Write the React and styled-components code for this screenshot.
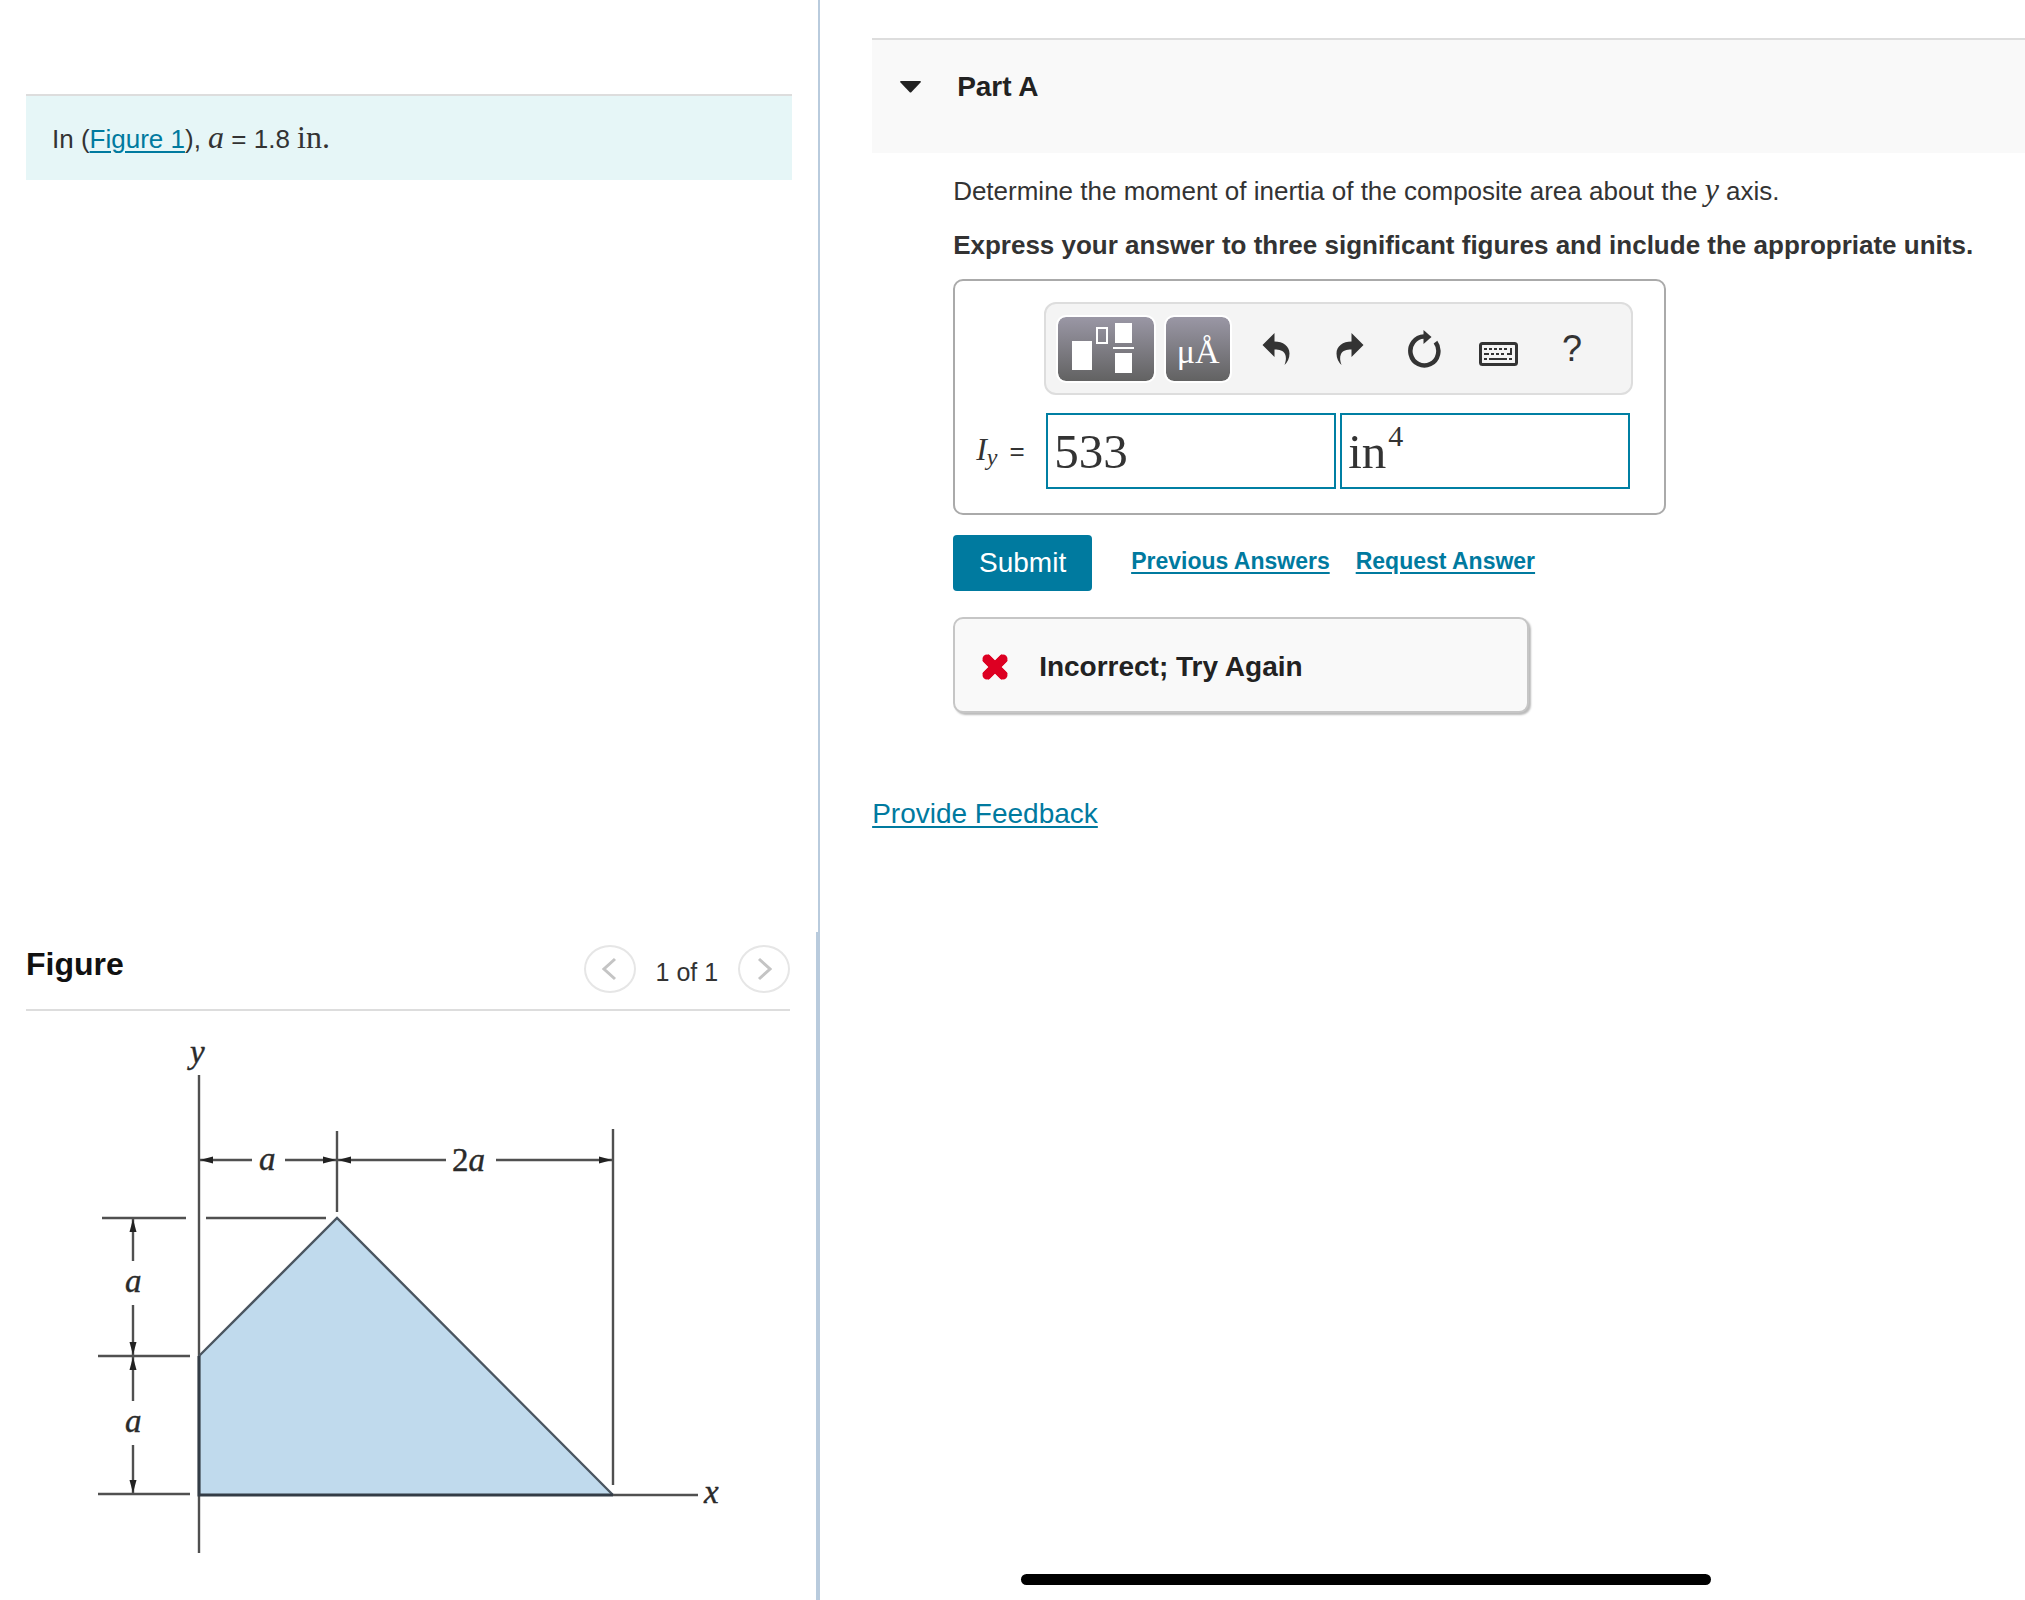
import React, { useState } from "react";
import styled, { createGlobalStyle, css } from "styled-components";

const sans = '"Liberation Sans", Arial, Helvetica, sans-serif';
const serif = '"Liberation Serif", "Times New Roman", serif';

const GlobalStyle = createGlobalStyle`
  *, *::before, *::after { box-sizing: border-box; }
  body {
    margin: 0;
    background: #fff;
    color: #333;
    font: 26px/36px ${sans};
  }
  h1, h2, p, form { margin: 0; }
`;

const Page = styled.div`
  display: grid;
  grid-template-columns: 81fr 119fr;
  min-height: 100vh;
`;

const LeftColumn = styled.aside`
  display: flex;
  flex-direction: column;
`;

const Pane = styled.section`
  flex: ${(p) => (p.$grow ? "1 0 auto" : "0 0 auto")};
  padding: ${(p) => p.$top}px 26px 0;
  border-right: ${(p) => p.$rule}px solid #b9cbdd;
`;

const Given = styled.p`
  padding: 25px 26px 23px;
  border-top: 2px solid #ddd;
  background: #e6f6f7;
`;

const Link = styled.a`
  color: #007a9f;
  text-decoration: underline;
  text-decoration-thickness: 2px;
  text-underline-offset: 3px;
  ${(p) => p.$size && css`font-size: ${p.$size}px;`}
  ${(p) => p.$bold && css`font-weight: 700;`}
`;

const MathText = styled.span`
  font-family: ${serif};
  font-size: 32px;
  line-height: 1;
  font-style: ${(p) => (p.$upright ? "normal" : "italic")};
  sub {
    font-size: 24px;
    line-height: 1;
    vertical-align: -5px;
  }
`;

const FigureHeader = styled.header`
  display: flex;
  align-items: flex-start;
  justify-content: space-between;
  height: 66px;
  border-bottom: 2px solid #ddd;
`;

const FigureTitle = styled.h2`
  color: #111;
  font-size: 32px;
  line-height: 38px;
`;

const Pager = styled.nav`
  display: flex;
  align-items: center;
  gap: 20px;
`;

const PagerButton = styled.button`
  display: grid;
  place-items: center;
  width: 52px;
  height: 48px;
  padding: 0;
  border: 2px solid #e6e6e6;
  border-radius: 50%;
  background: #fff;
  color: #c4c4c4;
`;

const PagerLabel = styled.span`
  padding-top: 6px;
  font-size: 25px;
`;

const Diagram = styled.svg`
  display: block;
  width: 764px;
  max-width: 100%;
  height: auto;
  text {
    font: italic 33px ${serif};
    fill: #2a2a2a;
    stroke: #2a2a2a;
    stroke-width: 0.4;
  }
`;

const RightColumn = styled.main`
  display: flex;
  flex-direction: column;
  padding: 38px 0 15px 52px;
`;

const PartHeader = styled.header`
  display: flex;
  align-items: flex-start;
  height: 115px;
  padding: 29px 28px;
  border-top: 2px solid #ddd;
  background: #f9f9f9;
`;

const PartToggle = styled.button`
  display: flex;
  align-items: center;
  gap: 36px;
  padding: 0;
  border: 0;
  background: none;
  color: #222;
  font: 700 28px/36px ${sans};
`;

const Question = styled.form`
  display: flex;
  flex-direction: column;
  align-items: flex-start;
  padding: 20px 48px 0 81px;
`;

const Prompt = styled.p`
  height: 36px;
  margin-bottom: ${(p) => (p.$bold ? 16 : 18)}px;
  font-weight: ${(p) => (p.$bold ? 700 : 400)};
`;

const AnswerBox = styled.div`
  display: grid;
  grid-template-columns: 70px auto;
  row-gap: 18px;
  margin-bottom: 20px;
  padding: 21px 34px 24px 21px;
  border: 2px solid #aaa;
  border-radius: 10px;
`;

const Toolbar = styled.div`
  grid-column: 2;
  display: flex;
  align-items: center;
  gap: 8px;
  height: 93px;
  margin: 0 -3px 0 -2px;
  padding: 0 10px;
  border: 2px solid #ddd;
  border-radius: 12px;
  background: #f4f4f4;
`;

const PaletteButton = styled.button`
  display: grid;
  place-items: center;
  width: ${(p) => p.$width}px;
  height: 68px;
  padding: 0;
  border: 2px solid #fff;
  border-radius: 10px;
  background: linear-gradient(#9a97a5, #626262) padding-box;
  color: #fff;
  font: 34px/1 ${serif};
  span { padding-top: 6px; }
`;

const Tools = styled.div`
  display: flex;
  gap: 8px;
  padding-left: 3px;
`;

const ToolButton = styled.button`
  display: grid;
  place-items: center;
  width: 66px;
  height: 60px;
  padding: 0;
  border: 0;
  background: none;
  color: #333;
  font: 36px/60px ${sans};
`;

const AnswerLabel = styled.label`
  display: flex;
  align-items: baseline;
  gap: 12px;
  align-self: center;
  white-space: nowrap;
`;

const Fields = styled.div`
  display: flex;
  gap: 4px;
`;

const Field = styled.div`
  display: flex;
  width: 290px;
  height: 76px;
  padding: 0 6px;
  border: 2px solid #007fa3;
  background: #fff;
`;

const FieldInput = styled.input`
  flex: ${(p) => (p.$width ? "none" : "1")};
  width: ${(p) => (p.$width ? `${p.$width}px` : "auto")};
  min-width: 0;
  height: ${(p) => (p.$raised ? 42 : 72)}px;
  padding: 0;
  border: 0;
  outline: 0;
  background: none;
  color: #333;
  font: ${(p) => (p.$raised ? 30 : 49)}px ${serif};
`;

const Actions = styled.div`
  display: flex;
  align-items: center;
  gap: 26px;
  margin-bottom: 26px;
`;

const Links = styled.div`
  display: flex;
  gap: 26px;
  padding: 0 0 5px 13px;
`;

const SubmitButton = styled.button`
  width: 139px;
  height: 56px;
  padding: 0;
  border: 0;
  border-radius: 4px;
  background: #007a9f;
  color: #fff;
  font: 28px/56px ${sans};
`;

const Verdict = styled.div`
  display: flex;
  align-items: center;
  gap: 30px;
  width: 576px;
  max-width: 100%;
  height: 96px;
  padding: 4px 26px 0;
  border: 2px solid #c6c6c6;
  border-radius: 10px;
  background: #f9f9f9;
  box-shadow: 2px 2px 2px #bbb;
  color: #222;
  font-size: 28px;
  font-weight: 700;
`;

const Feedback = styled.p`
  margin-top: 83px;
`;

const HomeBar = styled.div`
  width: 690px;
  max-width: 100%;
  height: 11px;
  margin: auto 0 0 149px;
  border-radius: 6px;
  background: #000;
`;

const Chevron = ({ next }) => (
  <svg width="16" height="24" viewBox="0 0 16 24" fill="none" stroke="currentColor" strokeWidth="3" aria-hidden="true">
    <path d={next ? "M3 2l11 10L3 22" : "M13 2L2 12l11 10"} />
  </svg>
);

const Caret = () => (
  <svg width="21" height="12" viewBox="0 0 21 12" fill="currentColor" aria-hidden="true">
    <path d="M1 0h19q1.500 0 .5 1.500L11.500 11q-1 1-2 0L.5 1.500Q-.5 0 1 0z" />
  </svg>
);

const TemplatesIcon = () => (
  <svg width="96" height="64" viewBox="0 0 96 64" fill="#fff" aria-hidden="true">
    <path d="M14 24h20v29H14zM57 6h17v20H57zM55 30h21v2H55zM57 36h17v20H57z" />
    <rect x="39" y="11" width="10" height="15" fill="none" stroke="#fff" strokeWidth="2" />
  </svg>
);

const ArrowIcon = ({ flip }) => (
  <svg width="28" height="32" viewBox="0 0 28 32" fill="currentColor" aria-hidden="true">
    <path
      transform={flip ? "translate(28 0) scale(-1 1)" : undefined}
      d="M0.500 12L12.500 0v8.500C21 8.500 27.500 13 27.500 20.500c0 5-2 8.500-5 11.500 1.500-4 2-8 .5-11-1.800-3.600-5.500-4.500-10.500-4.500V24z"
    />
  </svg>
);

const ResetIcon = () => (
  <svg width="34" height="38" viewBox="0 0 34 38" aria-hidden="true">
    <path d="M28.500 12.200A14 14.500 0 1 1 17 6.500" fill="none" stroke="currentColor" strokeWidth="4.500" />
    <path d="M16.500 0L24.500 7 16.500 14z" fill="currentColor" />
  </svg>
);

const KeyboardIcon = () => (
  <svg width="39" height="34" viewBox="0 -10 39 34" fill="currentColor" aria-hidden="true">
    <rect x="1.500" y="1.500" width="36" height="21" rx="2" fill="none" stroke="currentColor" strokeWidth="3" />
    <path d="M5 6h3v2H5zM10 6h3v2h-3zM15 6h3v2h-3zM20 6h3v2h-3zM25 6h3v2h-3zM31 6h2v7h-5v-2h3zM5 11h5v2H5zM12 11h3v2h-3zM17 11h3v2h-3zM22 11h3v2h-3zM5 16h3v2H5zM10 16h18v2H10zM30 16h3v2h-3z" />
  </svg>
);

const CrossIcon = () => (
  <svg width="28" height="28" viewBox="0 0 28 28" stroke="#dd0022" strokeWidth="9" aria-hidden="true">
    <path d="M4.500 4.500L23.500 23.500M23.500 4.500L4.500 23.500" />
    <path d="M6 6L22 22M22 6L6 22" strokeLinecap="round" />
  </svg>
);

const arrows = [
  "M226 149H174",
  "M259 149H310",
  "M420 149H312",
  "M470 149H586",
  "M107 250V208",
  "M107 294V344",
  "M107 390V346",
  "M107 434V482",
];

const CompositeArea = () => (
  <Diagram viewBox="0 0 764 589" role="img" aria-label="Composite area with dimensions a and 2a">
    <defs>
      <marker id="tip" viewBox="0 0 13 8" refX="13" refY="4" markerWidth="13" markerHeight="8" markerUnits="userSpaceOnUse" orient="auto">
        <path d="M0 0.500L13 4 0 7.500z" fill="#222" />
      </marker>
    </defs>
    <polygon points="173,345 311,207 587,484 173,484" fill="#c0daed" />
    <g fill="none" stroke="#505050" strokeWidth="2.400">
      <path d="M173 64V542M311 120V201M587 118V474M587 484H672" />
      <path d="M76 207H160M180 207H300M72 345H164M72 483H164" />
      {arrows.map((d) => (
        <path key={d} d={d} markerEnd="url(#tip)" />
      ))}
    </g>
    <path d="M173 345L311 207 587 484" fill="none" stroke="#4a5560" strokeWidth="2.400" />
    <path d="M173 345V484H587" fill="none" stroke="#333c46" strokeWidth="3" />
    <text x="164" y="52">y</text>
    <text x="678" y="492">x</text>
    <text x="233" y="159">a</text>
    <text x="426" y="160"><tspan fontStyle="normal">2</tspan>a</text>
    <text x="99" y="281">a</text>
    <text x="99" y="421">a</text>
  </Diagram>
);

export default function App() {
  const [value, setValue] = useState("533");
  const [unit, setUnit] = useState("in");
  const [power, setPower] = useState("4");

  return (
    <>
      <GlobalStyle />
      <Page>
        <LeftColumn>
          <Pane $grow $top={94} $rule={2}>
            <Given>
              In (<Link href="#figure">Figure 1</Link>), <MathText>a</MathText> = 1.8 <MathText $upright>in.</MathText>
            </Given>
          </Pane>
          <Pane id="figure" $top={13} $rule={4}>
            <FigureHeader>
              <FigureTitle>Figure</FigureTitle>
              <Pager aria-label="Figures">
                <PagerButton type="button" aria-label="Previous figure"><Chevron /></PagerButton>
                <PagerLabel>1 of 1</PagerLabel>
                <PagerButton type="button" aria-label="Next figure"><Chevron next /></PagerButton>
              </Pager>
            </FigureHeader>
            <CompositeArea />
          </Pane>
        </LeftColumn>

        <RightColumn>
          <PartHeader>
            <PartToggle type="button" aria-expanded="true"><Caret />Part A</PartToggle>
          </PartHeader>
          <Question onSubmit={(e) => e.preventDefault()}>
            <Prompt>
              Determine the moment of inertia of the composite area about the <MathText>y</MathText> axis.
            </Prompt>
            <Prompt $bold>
              Express your answer to three significant figures and include the appropriate units.
            </Prompt>
            <AnswerBox>
              <Toolbar role="toolbar" aria-label="Math tools">
                <PaletteButton type="button" $width={100} aria-label="Templates"><TemplatesIcon /></PaletteButton>
                <PaletteButton type="button" $width={68}><span>μÅ</span></PaletteButton>
                <Tools>
                  <ToolButton type="button" aria-label="Undo"><ArrowIcon /></ToolButton>
                  <ToolButton type="button" aria-label="Redo"><ArrowIcon flip /></ToolButton>
                  <ToolButton type="button" aria-label="Reset"><ResetIcon /></ToolButton>
                  <ToolButton type="button" aria-label="Keyboard shortcuts"><KeyboardIcon /></ToolButton>
                  <ToolButton type="button">?</ToolButton>
                </Tools>
              </Toolbar>
              <AnswerLabel htmlFor="value"><MathText>I<sub>y</sub></MathText> =</AnswerLabel>
              <Fields>
                <Field>
                  <FieldInput id="value" value={value} onChange={(e) => setValue(e.target.value)} />
                </Field>
                <Field>
                  <FieldInput aria-label="Unit" $width={40} value={unit} onChange={(e) => setUnit(e.target.value)} />
                  <FieldInput aria-label="Exponent" $raised value={power} onChange={(e) => setPower(e.target.value)} />
                </Field>
              </Fields>
            </AnswerBox>
            <Actions>
              <SubmitButton type="submit">Submit</SubmitButton>
              <Links>
                <Link href="#previous" $size={23} $bold>Previous Answers</Link>
                <Link href="#request" $size={23} $bold>Request Answer</Link>
              </Links>
            </Actions>
            <Verdict role="status"><CrossIcon />Incorrect; Try Again</Verdict>
          </Question>
          <Feedback><Link href="#feedback" $size={28}>Provide Feedback</Link></Feedback>
          <HomeBar />
        </RightColumn>
      </Page>
    </>
  );
}
